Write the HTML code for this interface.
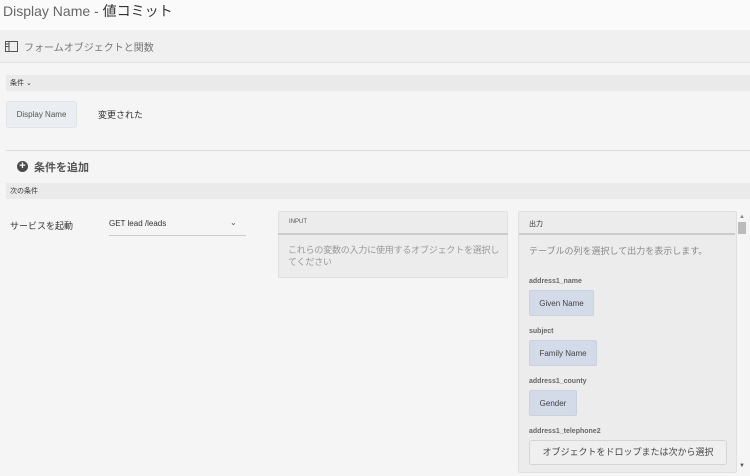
<!DOCTYPE html><html><head><meta charset="utf-8"><style>
*{box-sizing:border-box;margin:0;padding:0}
body{width:750px;height:476px;overflow:hidden;background:#f5f5f5;font-family:"Liberation Sans","Noto Sans CJK JP",sans-serif;color:#4b4b4b;position:relative}
.a{position:absolute}
</style></head><body>
<div class="a" style="left:0;top:0;width:750px;height:30px;background:#fafafa"></div>
<div class="a" style="left:3px;top:1px;font-size:14px;color:#555"><span style="color:#666">Display Name - </span><span style="color:#333">値コミット</span></div>
<div class="a" style="left:0;top:30px;width:750px;height:33px;background:#f0f0f0;border-bottom:1px solid #e2e2e2"></div>
<svg class="a" style="left:5px;top:41px" width="13" height="11"><rect x="0.5" y="0.5" width="12" height="10" fill="none" stroke="#555"/><line x1="4" y1="0" x2="4" y2="11" stroke="#555"/><line x1="1" y1="3" x2="4" y2="3" stroke="#555"/><line x1="1" y1="5.5" x2="4" y2="5.5" stroke="#555"/></svg>
<div class="a" style="left:24px;top:39px;font-size:10px;color:#777">フォームオブジェクトと関数</div>
<div class="a" style="left:6px;top:75px;width:744px;height:16px;background:#eaeaea"></div>
<div class="a" style="left:10px;top:78px;font-size:7px;color:#333">条件 ⌄</div>
<div class="a" style="left:6px;top:101px;width:71px;height:27px;background:#eaeef2;border:1px solid #e0e3e7;border-radius:3px;font-size:8px;line-height:26px;text-align:center;color:#555">Display Name</div>
<div class="a" style="left:98px;top:108px;font-size:9px;color:#333">変更された</div>
<div class="a" style="left:6px;top:150px;width:744px;height:1px;background:#ddd"></div>
<div class="a" style="left:17px;top:161px;width:11px;height:11px;border-radius:50%;background:#4b4b4b;color:#fff;font-size:11px;line-height:10px;text-align:center;font-weight:bold">+</div>
<div class="a" style="left:34px;top:159px;font-size:11px;font-weight:bold;color:#555">条件を追加</div>
<div class="a" style="left:6px;top:183px;width:744px;height:16px;background:#eaeaea"></div>
<div class="a" style="left:10px;top:186px;font-size:7px;color:#333">次の条件</div>
<div class="a" style="left:10px;top:219px;font-size:9px;color:#333">サービスを起動</div>
<div class="a" style="left:109px;top:219px;font-size:8px;color:#333">GET lead /leads</div>
<div class="a" style="left:230px;top:218px;font-size:8px;color:#555">⌄</div>
<div class="a" style="left:109px;top:235px;width:137px;height:1px;background:#ccc"></div>
<div class="a" style="left:278px;top:211px;width:230px;height:67px;background:#ececec;border:1px solid #e0e0e0;border-radius:2px"></div>
<div class="a" style="left:278px;top:233px;width:230px;height:2px;background:#ccc"></div>
<div class="a" style="left:289px;top:219px;font-size:6px;color:#555">INPUT</div>
<div class="a" style="left:288px;top:244px;width:218px;font-size:9px;color:#999;line-height:12px;letter-spacing:-0.2px">これらの変数の入力に使用するオブジェクトを選択してください</div>
<div class="a" style="left:518px;top:211px;width:219px;height:262px;background:#ececec;border:1px solid #e0e0e0;border-radius:2px"></div>
<div class="a" style="left:519px;top:233px;width:216px;height:2px;background:#ccc"></div>
<div class="a" style="left:529px;top:219px;font-size:7px;color:#333">出力</div>
<div class="a" style="left:739px;top:214px;font-size:6px;color:#888">▲</div>
<div class="a" style="left:738px;top:222px;width:8px;height:12px;background:#bbb"></div>
<div class="a" style="left:739px;top:463px;font-size:6px;color:#555">▼</div>
<div class="a" style="left:529px;top:244px;font-size:9px;color:#888">テーブルの列を選択して出力を表示します。</div>
<div class="a" style="left:529px;top:278px;font-size:7px;font-weight:bold;color:#666">address1_name</div>
<div class="a" style="left:529px;top:290px;width:65px;height:26px;background:#d3dbe8;border:1px solid #c8d2e0;border-radius:2px;font-size:8px;line-height:25px;text-align:center;color:#444">Given Name</div>
<div class="a" style="left:529px;top:328px;font-size:7px;font-weight:bold;color:#666">subject</div>
<div class="a" style="left:529px;top:340px;width:68px;height:26px;background:#d3dbe8;border:1px solid #c8d2e0;border-radius:2px;font-size:8px;line-height:25px;text-align:center;color:#444">Family Name</div>
<div class="a" style="left:529px;top:378px;font-size:7px;font-weight:bold;color:#666">address1_county</div>
<div class="a" style="left:529px;top:390px;width:48px;height:26px;background:#d3dbe8;border:1px solid #c8d2e0;border-radius:2px;font-size:8px;line-height:25px;text-align:center;color:#444">Gender</div>
<div class="a" style="left:529px;top:428px;font-size:7px;font-weight:bold;color:#666">address1_telephone2</div>
<div class="a" style="left:529px;top:440px;width:198px;height:25px;background:#efefef;border:1px solid #d5d5d5;border-radius:3px;font-size:9px;line-height:23px;text-align:center;color:#444">オブジェクトをドロップまたは次から選択</div>
</body></html>
